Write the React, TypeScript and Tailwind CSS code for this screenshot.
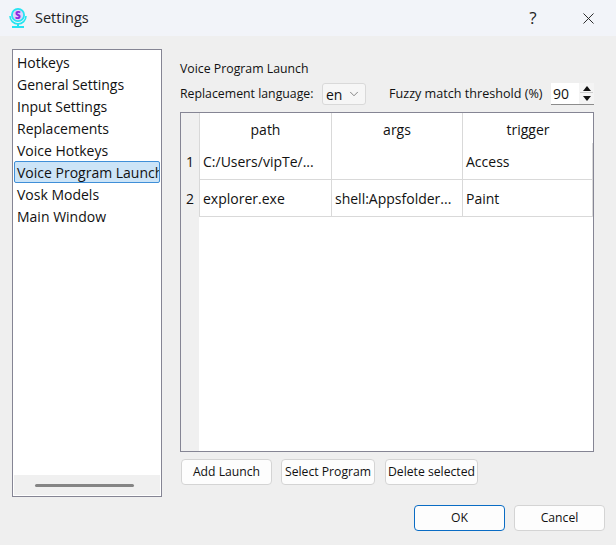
/**
 * Settings dialog — Voice Program Launch page.
 */
import { ChevronDown, X } from "lucide-react";

const pages = [
  "Hotkeys",
  "General Settings",
  "Input Settings",
  "Replacements",
  "Voice Hotkeys",
  "Voice Program Launch",
  "Vosk Models",
  "Main Window",
];

const rows = [
  { n: "1", path: "C:/Users/vipTe/...", args: "", trigger: "Access" },
  { n: "2", path: "explorer.exe", args: "shell:Appsfolder...", trigger: "Paint" },
];

function Btn({ label, className }: { label: string; className: string }) {
  return (
    <button className={`h-[26px] shrink-0 whitespace-nowrap rounded-[4px] border border-[#d4d4d4] bg-[#fdfdfd] pt-[1px] text-[12.2px] text-[#111] ${className}`}>
      {label}
    </button>
  );
}

function AppIcon() {
  return (
    <svg width="18" height="22" viewBox="0 0 18 22" className="shrink-0">
      <path d="M1 9a8 8 0 0 0 16 0" fill="none" stroke="#22e6f0" strokeWidth="1.6" />
      <circle cx="9" cy="8" r="7" fill="#25e3f2" />
      <circle cx="9" cy="8" r="5.2" fill="#ded2fb" />
      <text x="9" y="11.5" textAnchor="middle" fontSize="10" fontWeight="800" fill="#8a2be2" fontFamily="Open Sans, sans-serif">S</text>
      <rect x="8" y="16" width="2" height="3" fill="#25e3f2" />
      <rect x="3" y="19" width="12" height="2" fill="#25e3f2" />
    </svg>
  );
}

export default function App() {
  return (
    <div className="flex h-[545px] w-[616px] flex-col overflow-hidden bg-[#efefef] text-[#111] font-['Open_Sans','Noto_Sans',sans-serif]">
      {/* Title bar */}
      <div className="flex h-[36px] shrink-0 items-center bg-[#f2f4f9] pl-[9px]">
        <AppIcon />
        <span className="ml-[8px] text-[14.5px] text-[#222]">Settings</span>
        <span className="ml-auto w-[14px] text-center text-[17px] text-[#222]">?</span>
        <X className="ml-[39px] mr-[18px] h-[19px] w-[19px] text-[#222]" strokeWidth={1.2} />
      </div>

      <div className="flex pl-[12px] pt-[13px]">
        {/* Page list */}
        <div className="flex h-[448px] w-[150px] shrink-0 flex-col border border-[#858594] bg-white">
          <div className="flex-1 pl-[1px] pr-[1px] pt-[1px]">
            {pages.map((p) => (
              <div
                key={p}
                className={
                  p === "Voice Program Launch"
                    ? "flex h-[22px] items-center overflow-hidden whitespace-nowrap rounded-[2px] border border-[#3f8fd8] bg-[#cce4f7] pl-[2px] text-[14px]"
                    : "flex h-[22px] items-center whitespace-nowrap pl-[3px] text-[14px]"
                }
              >
                {p}
              </div>
            ))}
          </div>
          <div className="mx-[1px] mb-[1px] flex h-[20px] items-center justify-center bg-[#f0f0f0] pr-[5px]">
            <div className="h-[3px] w-[99px] rounded-full bg-[#858585]" />
          </div>
        </div>

        {/* Page content */}
        <div className="ml-[18px] flex w-[414px] flex-col">
          <div className="mt-[11px] h-[18px] text-[12.3px] leading-[18px] text-[#111]">Voice Program Launch</div>
          <div className="mt-[5px] flex h-[22px] items-center text-[12.3px]">
            <span className="w-[134px] shrink-0 whitespace-nowrap">Replacement language:</span>
            <div className="ml-[8px] flex h-[22px] w-[44px] shrink-0 items-center rounded-[3px] border border-[#d9d9d9] bg-[#f6f6f6] pl-[3px] text-[14px]">
              en
              <ChevronDown className="ml-[5px] h-[14px] w-[14px] text-[#555]" strokeWidth={1.2} />
            </div>
            <span className="ml-[23px] w-[154px] shrink-0 whitespace-nowrap text-[12.6px]">Fuzzy match threshold (%)</span>
            <div className="ml-[8px] flex h-[22px] w-[43px] shrink-0 items-center border-b border-[#8c8c8c] bg-white pl-[2px] text-[14px]">
              90
              <div className="ml-auto flex h-full w-[15px] flex-col items-center justify-center gap-[1px] bg-[#f4f4f4]">
                <div className="flex h-[9px] w-[13px] items-center justify-center border-b border-[#ccc]">
                  <svg width="8" height="5" viewBox="0 0 8 5"><path d="M4 0 8 5H0z" fill="#111" /></svg>
                </div>
                <div className="flex h-[9px] w-[13px] items-center justify-center">
                  <svg width="8" height="5" viewBox="0 0 8 5"><path d="M0 0h8L4 5z" fill="#111" /></svg>
                </div>
              </div>
            </div>
          </div>

          {/* Launch table */}
          <div className="mt-[7px] flex h-[340px] w-[414px] flex-col border border-[#858594] bg-white text-[14px]">
            <div className="grid h-[30px] shrink-0 grid-cols-[18px_132px_131px_131px]">
              <div className="bg-[#f0f0f0]" />
              {["path", "args", "trigger"].map((h) => (
                <div key={h} className="flex items-center justify-center border-l border-[#d9d9d9] pt-[2px]">
                  {h}
                </div>
              ))}
            </div>
            {rows.map((r) => (
              <div key={r.n} className="grid h-[37px] shrink-0 grid-cols-[18px_132px_131px_131px]">
                <div className="flex items-center justify-center bg-[#f0f0f0]">{r.n}</div>
                <div className="flex items-center overflow-hidden whitespace-nowrap border-b border-l border-[#d9d9d9] pl-[3px]">{r.path}</div>
                <div className="flex items-center overflow-hidden whitespace-nowrap border-b border-l border-[#d9d9d9] pl-[3px]">{r.args}</div>
                <div className="flex items-center overflow-hidden whitespace-nowrap border-x border-b border-[#d9d9d9] pl-[3px]">{r.trigger}</div>
              </div>
            ))}
            <div className="flex-1">
              <div className="h-full w-[18px] bg-[#f0f0f0]" />
            </div>
          </div>

          <div className="ml-[1px] mt-[7px] flex">
            <Btn label="Add Launch" className="w-[91px]" />
            <Btn label="Select Program" className="ml-[9px] w-[94px]" />
            <Btn label="Delete selected" className="ml-[10px] w-[93px]" />
          </div>
        </div>
      </div>

      {/* Dialog buttons */}
      <div className="mt-[8px] flex justify-end pr-[11px]">
        <Btn label="OK" className="w-[91px] !border-[#0a6cc4]" />
        <Btn label="Cancel" className="ml-[9px] w-[91px]" />
      </div>
    </div>
  );
}
